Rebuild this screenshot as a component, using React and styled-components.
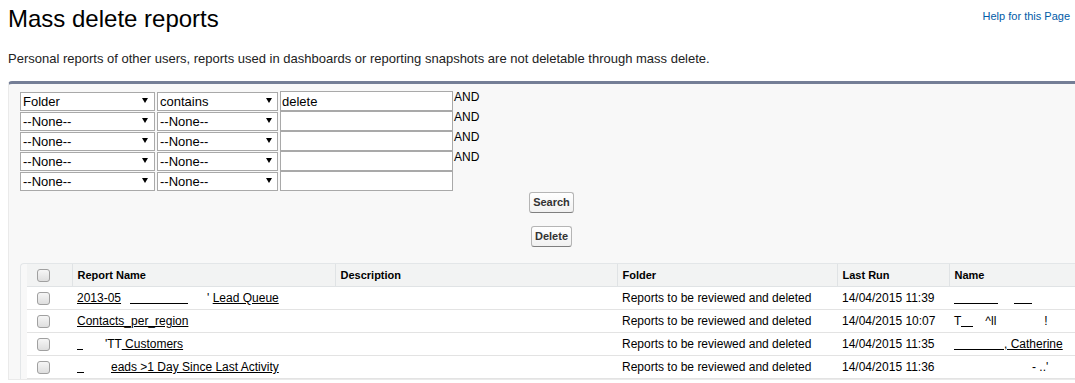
import React from 'react';
import styled, { createGlobalStyle } from 'styled-components';

const GlobalStyle = createGlobalStyle`
  html {
    overflow: hidden;
  }
  body {
    margin: 8px 0 8px 8px;
    background: #fff;
    font-family: "Liberation Sans", Arial, sans-serif;
    color: #000;
  }
`;

const filters = [
  { field: 'Folder', op: 'contains', value: 'delete', and: true },
  { field: '--None--', op: '--None--', value: '', and: true },
  { field: '--None--', op: '--None--', value: '', and: true },
  { field: '--None--', op: '--None--', value: '', and: true },
  { field: '--None--', op: '--None--', value: '', and: false },
];

const MassDeleteReports = () => {
  return (
    <Page>
      <GlobalStyle />
      <Header>
        <Title>Mass delete reports</Title>
        <HelpLink href="#">Help for this Page</HelpLink>
      </Header>
      <Intro>
        Personal reports of other users, reports used in dashboards or reporting snapshots are not
        deletable through mass delete.
      </Intro>

      <Panel>
        <Filters>
          {filters.map((f, i) => (
            <FilterRow key={i}>
              <SelectBox width={135} arrowRight={7}>
                <Select defaultValue={f.field}>
                  <option>--None--</option>
                  <option>Folder</option>
                </Select>
              </SelectBox>
              <SelectBox width={121} arrowRight={6}>
                <Select defaultValue={f.op}>
                  <option>--None--</option>
                  <option>contains</option>
                </Select>
              </SelectBox>
              <TextInput defaultValue={f.value} />
              {f.and && <AndLabel>AND</AndLabel>}
            </FilterRow>
          ))}
        </Filters>

        <Actions>
          <Button>Search</Button>
          <Button>Delete</Button>
        </Actions>

        <ListBlock>
          <List>
            <colgroup>
              <col style={{ width: 45 }} />
              <col style={{ width: 263 }} />
              <col style={{ width: 282 }} />
              <col style={{ width: 220 }} />
              <col style={{ width: 112 }} />
              <col />
            </colgroup>
            <thead>
              <tr>
                <HeadCell first>
                  <Check />
                </HeadCell>
                <HeadCell>Report Name</HeadCell>
                <HeadCell>Description</HeadCell>
                <HeadCell>Folder</HeadCell>
                <HeadCell>Last Run</HeadCell>
                <HeadCell>Name</HeadCell>
              </tr>
            </thead>
            <tbody>
              <tr>
                <CheckCell><Check /></CheckCell>
                <Cell>
                  <Link href="#">2013-05</Link>
                  <Blank w={9} line={false} />
                  <Blank w={58} line />
                  <Blank w={19} line={false} />
                  <Mark>' </Mark>
                  <Link href="#">Lead Queue</Link>
                </Cell>
                <Cell />
                <Cell>Reports to be reviewed and deleted</Cell>
                <Cell>14/04/2015 11:39</Cell>
                <Cell>
                  <Blank w={44} line />
                  <Blank w={16} line={false} />
                  <Blank w={18} line />
                </Cell>
              </tr>
              <tr>
                <CheckCell><Check /></CheckCell>
                <Cell><Link href="#">Contacts_per_region</Link></Cell>
                <Cell />
                <Cell>Reports to be reviewed and deleted</Cell>
                <Cell>14/04/2015 10:07</Cell>
                <Cell>
                  <Mark>T</Mark>
                  <Blank w={12} line />
                  <Blank w={12} line={false} />
                  <Mark>^ll</Mark>
                  <Blank w={48} line={false} />
                  <Mark>!</Mark>
                </Cell>
              </tr>
              <tr>
                <CheckCell><Check /></CheckCell>
                <Cell>
                  <Blank w={6} line />
                  <Blank w={22} line={false} />
                  <Mark>'TT</Mark>
                  <Link href="#"> Customers</Link>
                </Cell>
                <Cell />
                <Cell>Reports to be reviewed and deleted</Cell>
                <Cell>14/04/2015 11:35</Cell>
                <Cell>
                  <Blank w={50} line />
                  <Link href="#">, Catherine</Link>
                </Cell>
              </tr>
              <tr>
                <CheckCell><Check /></CheckCell>
                <Cell>
                  <Blank w={7} line />
                  <Blank w={27} line={false} />
                  <Link href="#">eads &gt;1 Day Since Last Activity</Link>
                </Cell>
                <Cell />
                <Cell>Reports to be reviewed and deleted</Cell>
                <Cell>14/04/2015 11:36</Cell>
                <Cell>
                  <Blank w={78} line={false} />
                  <Mark>- ..'</Mark>
                </Cell>
              </tr>
            </tbody>
          </List>
        </ListBlock>
      </Panel>
    </Page>
  );
};

const Page = styled.div``;

const Header = styled.div`
  display: flex;
  justify-content: space-between;
  align-items: flex-start;
  padding-right: 5px;
`;

const Title = styled.h1`
  margin: 0;
  font-size: 24px;
  line-height: 22px;
  font-weight: normal;
  color: #000;
`;

const HelpLink = styled.a`
  padding-top: 2px;
  font-size: 11px;
  line-height: 13px;
  color: #015ba7;
  text-decoration: none;
  white-space: nowrap;
`;

const Intro = styled.p`
  margin: 21px 0 0;
  font-size: 13px;
  line-height: 15px;
  color: #222;
`;

const Panel = styled.div`
  margin: 15px -20px 0 0;
  padding: 7px 11px 0;
  background: #f8f8f8;
  border: 1px solid #eaeaea;
  border-top: 3px solid #747e96;
  border-radius: 4px 4px 0 0;
`;

const Filters = styled.div`
  display: flex;
  flex-direction: column;
`;

const FilterRow = styled.div`
  display: flex;
  align-items: flex-start;
  gap: 2px;
  height: 20px;
`;

const SelectBox = styled.div`
  position: relative;
  width: ${p => p.width}px;
  height: 19px;
  margin-top: 1px;

  &::after {
    content: '';
    position: absolute;
    top: 6px;
    right: ${p => p.arrowRight}px;
    border-left: 3px solid transparent;
    border-right: 3px solid transparent;
    border-top: 5px solid #000;
    pointer-events: none;
  }
`;

const Select = styled.select`
  appearance: none;
  box-sizing: border-box;
  width: 100%;
  height: 100%;
  margin: 0;
  padding: 0 2px;
  border: 1px solid #a9a9a9;
  border-radius: 0;
  background: #fff;
  font-family: "Liberation Sans", Arial, sans-serif;
  font-size: 13px;
  color: #000;
  outline: none;
`;

const TextInput = styled.input`
  box-sizing: border-box;
  width: 173px;
  height: 20px;
  margin: 0;
  padding: 0 1px;
  border: 1px solid #a9a9a9;
  background: #fff;
  font-family: "Liberation Sans", Arial, sans-serif;
  font-size: 13px;
  color: #000;
  outline: none;
`;

const AndLabel = styled.span`
  margin-left: -1px;
  font-size: 12px;
  line-height: 12px;
  color: #000;
`;

const Actions = styled.div`
  display: flex;
  flex-direction: column;
  align-items: center;
  gap: 13px;
  margin-top: 1px;
`;

const Button = styled.button`
  box-sizing: border-box;
  height: 21px;
  margin: 0;
  padding: 0 3px;
  border: 1px solid #b5b5b5;
  border-bottom-color: #7f7f7f;
  border-radius: 3px;
  background: linear-gradient(#ffffff, #f1f1f1);
  font-family: "Liberation Sans", Arial, sans-serif;
  font-size: 11px;
  font-weight: bold;
  line-height: 19px;
  color: #333;
  cursor: pointer;
`;

const ListBlock = styled.div`
  margin-top: 16px;
  padding: 0 6px;
  background: #f8f8f8;
  border: 1px solid #e3e6e8;
  border-bottom: none;
  border-right: none;
  border-radius: 4px 0 0 0;
`;

const List = styled.table`
  width: 100%;
  table-layout: fixed;
  border-collapse: collapse;
  background: #fff;
`;

const HeadCell = styled.th`
  height: 22px;
  padding: 0 0 0 ${p => (p.first ? 10 : 5)}px;
  background: #f2f3f3;
  border-bottom: 1px solid #e0e3e5;
  border-left: ${p => (p.first ? 'none' : '1px solid #e0e3e5')};
  font-size: 11px;
  font-weight: bold;
  line-height: 22px;
  text-align: left;
  vertical-align: middle;
  white-space: nowrap;
  overflow: hidden;
  color: #000;
`;

const Cell = styled.td`
  height: 22px;
  padding: 0 0 0 5px;
  border-bottom: 1px solid #e3e3e3;
  font-size: 12px;
  line-height: 22px;
  vertical-align: middle;
  white-space: nowrap;
  overflow: hidden;
  color: #000;
`;

const CheckCell = styled(Cell)`
  padding-left: 10px;
`;

const Check = styled.span`
  display: block;
  box-sizing: border-box;
  width: 13px;
  height: 13px;
  border: 1px solid #a0a0a0;
  border-radius: 3px;
  background: linear-gradient(#f6f6f6, #dedede);
`;

const Link = styled.a`
  color: #000;
  text-decoration: underline;
`;

const Blank = styled.span`
  display: inline-block;
  width: ${p => p.w}px;
  height: 0;
  margin-bottom: -2px;
  border-bottom: 1px solid ${p => (p.line ? '#000' : 'transparent')};
`;

const Mark = styled.span`
  color: #000;
`;

export default MassDeleteReports;
